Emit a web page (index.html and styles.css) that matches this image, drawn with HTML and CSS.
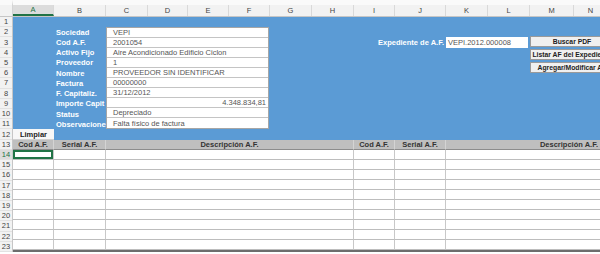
FILE: index.html
```html
<!DOCTYPE html>
<html lang="es">
<head>
  <meta charset="UTF-8" />
  <meta name="viewport" content="width=device-width, initial-scale=1.0"/>
  <title>Activos Fijos</title>
  <link rel="stylesheet" href="styles.css">
</head>
<body>
  <div class="sheet">
    <div class="corner"></div>
    <div class="colheads" id="colheads"></div>
    <div class="rownums" id="rownums"></div>

    <div class="panel"></div>

    <div class="labels">
      <div>Sociedad</div>
      <div>Cod A.F.</div>
      <div>Activo Fijo</div>
      <div>Proveedor</div>
      <div>Nombre</div>
      <div>Factura</div>
      <div>F. Capitaliz.</div>
      <div>Importe Capit</div>
      <div>Status</div>
      <div>Observaciones</div>
    </div>

    <div class="values">
      <div>VEPI</div>
      <div>2001054</div>
      <div>Aire Acondicionado Edificio Ciclon</div>
      <div>1</div>
      <div>PROVEEDOR SIN IDENTIFICAR</div>
      <div>00000000</div>
      <div>31/12/2012</div>
      <div class="num">4.348.834,81</div>
      <div>Depreciado</div>
      <div>Falta físico de factura</div>
    </div>

    <div class="exp-label">Expediente de A.F.</div>
    <div class="exp-input">VEPI.2012.000008</div>

    <div class="buttons">
      <button>Buscar PDF</button>
      <button>Listar AF del Expediente</button>
      <button>Agregar/Modificar AF</button>
    </div>

    <button class="clear">Limpiar</button>

    <div class="table" id="table">
      <div class="th">Cod A.F.</div>
      <div class="th">Serial A.F.</div>
      <div class="th">Descripción A.F.</div>
      <div class="th">Cod A.F.</div>
      <div class="th">Serial A.F.</div>
      <div class="th">Descripción A.F.</div>
    </div>
  </div>

  <script>
    const letters = 'ABCDEFGHIJKLMN';
    const colheads = document.getElementById('colheads');
    for (const l of letters) {
      const d = document.createElement('div');
      d.textContent = l;
      if (l === 'A') d.className = 'active';
      colheads.appendChild(d);
    }

    const rownums = document.getElementById('rownums');
    for (let r = 1; r <= 23; r++) {
      const d = document.createElement('div');
      d.textContent = r;
      if (r === 14) d.className = 'active';
      rownums.appendChild(d);
    }

    const table = document.getElementById('table');
    for (let r = 0; r < 10; r++) {
      for (let c = 0; c < 6; c++) {
        const td = document.createElement('div');
        td.className = 'td';
        if (r === 0 && c === 0) td.classList.add('sel');
        table.appendChild(td);
      }
    }
  </script>
</body>
</html>
```

FILE: styles.css
```css
body {
  margin: 0;
  padding: 0;
  overflow: hidden;
  background: #fff;
  font-family: 'Liberation Sans', Arial, sans-serif;
  font-size: 7.5px;
  color: #444;
}

.sheet {
  --cols: 41px 52px 42px 40px 41px 41px 42px 42px 41px 51px 42px 42px 44px 34px;
  display: grid;
  grid-template-columns: 13px var(--cols);
  grid-template-rows: 17px repeat(23, 10.23px);
  width: 607px;
}

/* headers */

.corner {
  grid-column: 1 / 2;
  grid-row: 1 / 2;
  background: #f2f2f2;
  border-top: 5px solid #fafafa;
  border-right: 1px solid #d4d4d4;
  border-bottom: 1px solid #c6c6c6;
}

.colheads {
  grid-column: 2 / 16;
  grid-row: 1 / 2;
  display: grid;
  grid-template-columns: var(--cols);
  border-top: 5px solid #fafafa;
  background: #f2f2f2;
  border-bottom: 1px solid #c6c6c6;
}

.colheads div {
  display: flex;
  align-items: center;
  justify-content: center;
  border-right: 1px solid #d9d9d9;
  color: #444;
  font-size: 7.5px;
}

.colheads div.active {
  background: #dcdcdc;
  border-bottom: 2px solid #217346;
  color: #217346;
}

.rownums {
  grid-column: 1 / 2;
  grid-row: 2 / 25;
  display: grid;
  grid-template-rows: repeat(23, 1fr);
  background: #f2f2f2;
  border-right: 1px solid #c6c6c6;
}

.rownums div {
  display: flex;
  align-items: center;
  justify-content: center;
  font-size: 7.5px;
  color: #444;
  border-bottom: 1px solid #e2e2e2;
}

.rownums div.active {
  background: #dcdcdc;
  color: #217346;
}

/* blue form area */

.panel {
  grid-column: 2 / 16;
  grid-row: 2 / 14;
  background: #5b9bd5;
}

.labels {
  grid-column: 3 / 4;
  grid-row: 3 / 13;
  display: grid;
  grid-template-rows: repeat(10, 1fr);
  color: #fff;
  font-weight: bold;
}

.labels div {
  display: flex;
  align-items: center;
  padding-left: 2px;
  white-space: nowrap;
}

.values {
  grid-column: 4 / 8;
  grid-row: 3 / 13;
  display: grid;
  grid-template-rows: repeat(10, 1fr);
  background: #fff;
  border: 1px solid #a6a6a6;
  margin-right: 1px;
}

.values div {
  display: flex;
  align-items: center;
  padding-left: 6px;
  border-bottom: 1px solid #c4c4c4;
  white-space: nowrap;
  color: #555;
}

.values div:last-child {
  border-bottom: none;
}

.values div.num {
  justify-content: flex-end;
  padding-right: 2px;
}

.exp-label {
  grid-column: 8 / 12;
  grid-row: 4 / 5;
  display: flex;
  align-items: center;
  justify-content: flex-end;
  padding-right: 2px;
  color: #fff;
  font-weight: bold;
}

.exp-input {
  grid-column: 12 / 14;
  grid-row: 4 / 5;
  display: flex;
  align-items: center;
  padding-left: 2px;
  background: #fff;
  color: #555;
  margin-right: 2px;
}

.buttons {
  grid-column: 14 / 16;
  grid-row: 4 / 8;
  display: flex;
  flex-direction: column;
  align-items: flex-start;
  gap: 2px;
  margin-top: -1px;
}

.buttons button,
.clear {
  font-family: inherit;
  font-size: 7.5px;
  font-weight: bold;
  color: #222;
  background: #f0f0f0;
  border: 1px solid #9a9a9a;
  padding: 0;
  white-space: nowrap;
}

.buttons button {
  flex: none;
  width: 84px;
  height: 11px;
  font-size: 6.8px;
}

.clear {
  grid-column: 2 / 3;
  grid-row: 13 / 14;
  background: #f7f7f7;
  border: none;
  border-bottom: 1px solid #d0d0d0;
}

/* list table */

.table {
  grid-column: 2 / 16;
  grid-row: 14 / 25;
  display: grid;
  grid-template-columns: 41px 52px 248px 41px 51px 1fr;
  grid-template-rows: repeat(11, 1fr);
  border-bottom: 2px solid #6d6d6d;
}

.th {
  display: flex;
  align-items: center;
  justify-content: center;
  background: #bfbfbf;
  border-right: 1px solid #d4d4d4;
  border-bottom: 1px solid #8c8c8c;
  font-weight: bold;
  color: #333;
  white-space: nowrap;
}

.th:nth-child(6) {
  justify-content: flex-end;
  padding-right: 9px;
}

.td {
  border-right: 1px solid #c8c8c8;
  border-bottom: 1px solid #bdbdbd;
}

.td.sel {
  box-shadow: inset 0 0 0 2px #217346;
}
```
